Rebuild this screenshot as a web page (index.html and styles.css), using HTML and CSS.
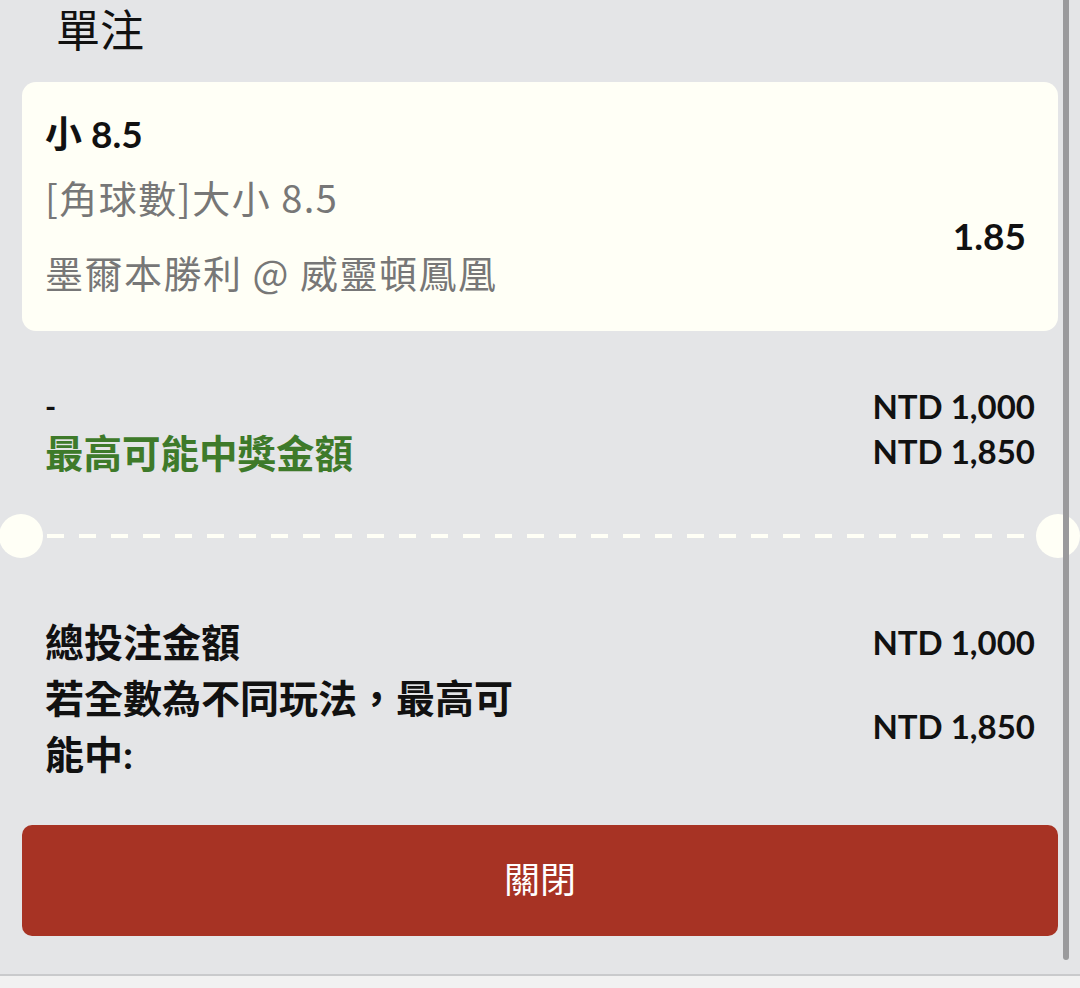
FILE: index.html
```html
<!DOCTYPE html>
<html lang="zh-Hant">
<head>
<meta charset="utf-8">
<title>單注</title>
<link rel="stylesheet" href="styles.css">
</head>
<body>
<div class="sheet">
  <h1 class="heading">單注</h1>
  <div class="card">
    <div class="card-info">
      <div class="sel-title">小 8.5</div>
      <div class="sel-market">[角球數]大小 8.5</div>
      <div class="sel-match">墨爾本勝利 @ 威靈頓鳳凰</div>
    </div>
    <div class="odds">1.85</div>
  </div>
  <div class="stake">
    <div class="row">
      <span class="dash">-</span>
      <span class="amount">NTD 1,000</span>
    </div>
    <div class="row">
      <span class="green">最高可能中獎金額</span>
      <span class="amount">NTD 1,850</span>
    </div>
  </div>
  <div class="divider">
    <span class="notch"></span>
    <span class="dashes"></span>
    <span class="notch"></span>
  </div>
  <div class="summary">
    <div class="row">
      <span class="label">總投注金額</span>
      <span class="amount">NTD 1,000</span>
    </div>
    <div class="row">
      <span class="label wrap">若全數為不同玩法，最高可能中:</span>
      <span class="amount">NTD 1,850</span>
    </div>
  </div>
  <button class="close-btn">關閉</button>
  <div class="scrollbar"></div>
</div>
<div class="bottom-strip"></div>
</body>
</html>
```

FILE: styles.css
```css
* { box-sizing: border-box; }
html, body { margin: 0; padding: 0; }
body {
  width: 1080px;
  height: 988px;
  overflow: hidden;
  background: #e4e5e7;
  font-family: "Lato", "Noto Sans CJK TC", sans-serif;
  color: #111;
}
.sheet {
  position: relative;
  height: 976px;
  border-bottom: 2px solid #c9cacc;
  overflow: hidden;
}
.heading {
  margin: 0;
  padding-left: 56px;
  font-family: "Noto Sans CJK TC", sans-serif;
  font-weight: 400;
  font-size: 44px;
  line-height: 56px;
  color: #111;
}
.card {
  margin: 26px 22px 0;
  height: 249px;
  background: #fffff6;
  border-radius: 14px;
  padding: 28px 32px 0 23px;
  display: flex;
  justify-content: space-between;
  align-items: flex-start;
}
.sel-title {
  font-weight: 700;
  font-size: 37px;
  line-height: 48px;
}
.sel-market, .sel-match {
  font-family: "Noto Sans CJK TC", sans-serif;
  color: #777;
  font-size: 38px;
  letter-spacing: 1.5px;
}
.sel-market { line-height: 78px; }
.sel-match { line-height: 72px; }
.odds {
  font-weight: 700;
  font-size: 37px;
  line-height: 48px;
  margin-top: 102px;
}
.stake {
  margin-top: 52px;
  padding: 0 45px;
}
.row {
  display: flex;
  justify-content: space-between;
  align-items: center;
}
.stake .row { height: 45px; }
.dash { font-weight: 700; font-size: 30px; }
.amount {
  font-weight: 700;
  font-size: 33px;
}
.green {
  color: #3e7a2a;
  font-weight: 700;
  font-size: 38.5px;
}
.divider {
  margin-top: 41px;
  height: 44px;
  display: flex;
  align-items: center;
}
.notch {
  flex: 0 0 44px;
  height: 44px;
  border-radius: 50%;
  background: #fffff6;
}
.notch:first-child { margin-left: -1px; }
.dashes {
  flex: 1;
  height: 4px;
  margin: 0 4px;
  background: repeating-linear-gradient(to right, #fffff6 0 17px, transparent 17px 32px);
}
.summary {
  margin-top: 56px;
  padding: 0 45px;
}
.label {
  font-weight: 700;
  font-size: 39px;
  line-height: 56px;
}
.wrap { max-width: 480px; }
.close-btn {
  display: block;
  margin: 43px 22px 0;
  width: calc(100% - 44px);
  height: 111px;
  padding: 0 0 8px;
  border: none;
  border-radius: 10px;
  background: #a73324;
  color: #fff;
  font-family: "Noto Sans CJK TC", sans-serif;
  font-size: 36px;
  font-weight: 400;
}
.scrollbar {
  position: absolute;
  top: 0;
  left: 1063px;
  width: 6px;
  height: 960px;
  border-radius: 0 0 3px 3px;
  background: #9a9a9c;
}
.bottom-strip {
  height: 12px;
  background: #f1f1f1;
}
```
